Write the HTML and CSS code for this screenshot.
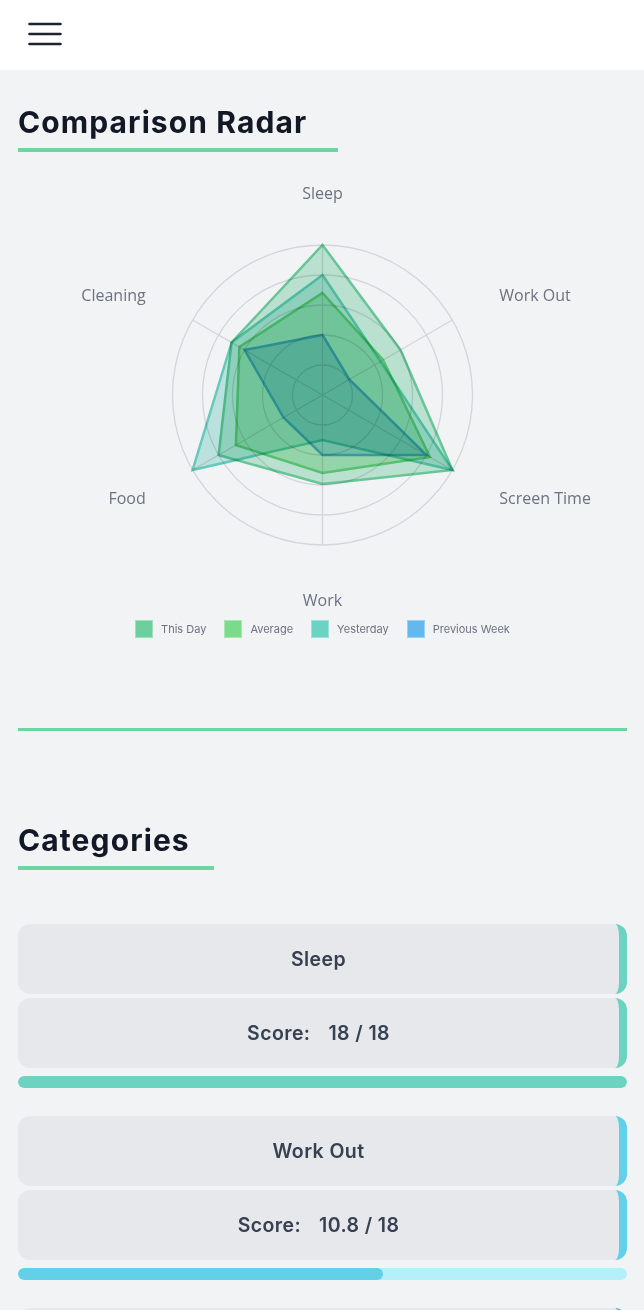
FILE: index.html
```html
<!DOCTYPE html>
<html lang="en">
<head>
<meta charset="utf-8">
<title>Comparison Radar</title>
<link rel="stylesheet" href="styles.css">
</head>
<body>
<header class="topbar">
  <button class="menu-btn" aria-label="Menu">
    <svg width="38" height="28" viewBox="0 0 38 28" fill="none" stroke="#1e2330" stroke-width="2.6" stroke-linecap="round">
      <path d="M3.5 3h31M3.5 13h31M3.5 23h31"/>
    </svg>
  </button>
</header>
<main class="page">
  <section class="radar-section">
    <h2 class="section-title">Comparison Radar</h2>
    <div class="title-bar title-bar--wide"></div>
    <div class="chart">
      <svg class="radar" width="609" height="440" viewBox="0 0 609 440">
        <rect class="radar-bg" x="0" y="0" width="609" height="440"/>
        <g class="grid">
          <circle cx="304.5" cy="225" r="30"/>
          <circle cx="304.5" cy="225" r="60"/>
          <circle cx="304.5" cy="225" r="90"/>
          <circle cx="304.5" cy="225" r="120"/>
          <circle cx="304.5" cy="225" r="150"/>
          <path d="M304.5 225V75M304.5 225L434.4 150M304.5 225L434.4 300M304.5 225V375M304.5 225L174.6 300M304.5 225L174.6 150"/>
        </g>
        <polygon class="ds ds--week" points="304.5,165 331.3,209.5 408.4,285 304.5,285 265.5,247.5 226.6,180"/>
        <polygon class="ds ds--yesterday" points="304.5,105 362.5,191.5 434.4,300 304.5,270 174.6,300 213.6,172.5"/>
        <polygon class="ds ds--average" points="304.5,123 365.1,190 411.9,287 304.5,303 217.9,275 221.4,177"/>
        <polygon class="ds ds--today" points="304.5,75 382.4,180 434.4,300 304.5,314 200.6,285 213.6,172.5"/>
        <g class="axis-labels">
          <text x="304.5" y="28.5" text-anchor="middle">Sleep</text>
          <text x="481.3" y="130.5">Work Out</text>
          <text x="481.3" y="334.3">Screen Time</text>
          <text x="304.5" y="436" text-anchor="middle">Work</text>
          <text x="127.7" y="334.3" text-anchor="end">Food</text>
          <text x="127.7" y="130.5" text-anchor="end">Cleaning</text>
        </g>
      </svg>
      <ul class="legend">
        <li class="legend-item"><span class="swatch swatch--today"></span>This Day</li>
        <li class="legend-item"><span class="swatch swatch--average"></span>Average</li>
        <li class="legend-item"><span class="swatch swatch--yesterday"></span>Yesterday</li>
        <li class="legend-item"><span class="swatch swatch--week"></span>Previous Week</li>
      </ul>
    </div>
  </section>

  <hr class="divider">

  <section class="categories">
    <h2 class="section-title">Categories</h2>
    <div class="title-bar title-bar--narrow"></div>
    <div class="cat-list">
      <article class="cat cat--sleep">
        <div class="cat-card"><span class="cat-name">Sleep</span></div>
        <div class="cat-card"><span class="score-label">Score:</span><span class="score-value">18 / 18</span></div>
        <div class="cat-track"><div class="cat-fill" style="width:100%"></div></div>
      </article>
      <article class="cat cat--workout">
        <div class="cat-card"><span class="cat-name">Work Out</span></div>
        <div class="cat-card"><span class="score-label">Score:</span><span class="score-value">10.8 / 18</span></div>
        <div class="cat-track"><div class="cat-fill" style="width:60%"></div></div>
      </article>
      <article class="cat cat--screen">
        <div class="cat-card" aria-label="Screen Time"></div>
      </article>
    </div>
  </section>
</main>
</body>
</html>
```

FILE: styles.css
```css
* { box-sizing: border-box; }

html, body {
  margin: 0;
  padding: 0;
}

body {
  background: #f2f3f5;
  font-family: Inter, "Noto Sans", sans-serif;
  color: #111827;
}

.topbar {
  height: 70px;
  background: #ffffff;
  display: flex;
  align-items: center;
  padding-left: 26px;
}

.menu-btn {
  border: 0;
  background: none;
  padding: 0;
  margin: 0;
  display: flex;
  cursor: pointer;
}

.page {
  padding: 34px 17px 40px 18px;
}

.section-title {
  margin: 0;
  font-size: 30px;
  line-height: 36px;
  font-weight: 700;
  color: #131826;
  letter-spacing: 1.1px;
}

.title-bar {
  height: 4px;
  margin-top: 8px;
  background: #6fd3a2;
}

.title-bar--wide { width: 320px; }
.title-bar--narrow { width: 196px; }

.chart {
  margin-top: 18px;
}

.radar {
  display: block;
}

.radar-bg {
  fill: #f2f3f5;
}

.grid circle,
.grid path {
  fill: none;
  stroke: #d3d5d9;
  stroke-width: 1.3;
}

.ds {
  stroke-width: 2.5;
  fill-opacity: 0.4;
  mix-blend-mode: multiply;
}

.ds--today { fill: #6ccf9e; stroke: #6ccf9e; }
.ds--average { fill: #7adb8a; stroke: #7adb8a; }
.ds--yesterday { fill: #6bd3c2; stroke: #6bd3c2; }
.ds--week { fill: #63b8f0; stroke: #63b8f0; }

.axis-labels text {
  font-family: "Open Sans", "Noto Sans", sans-serif;
  font-size: 16px;
  fill: #6b7280;
}

.legend {
  list-style: none;
  margin: 10px 0 0;
  padding: 0;
  display: flex;
  justify-content: center;
  gap: 18px;
  height: 18px;
}

.legend-item {
  display: flex;
  align-items: center;
  gap: 8px;
  font-size: 11px;
  color: #6b7280;
}

.swatch {
  width: 18px;
  height: 18px;
  border: 1px solid rgba(255, 255, 255, 0.35);
}

.swatch--today { background: #6ccf9e; }
.swatch--average { background: #7adb8a; }
.swatch--yesterday { background: #6bd3c2; }
.swatch--week { background: #63b8f0; }

.divider {
  margin: 90px 0 0;
  border: 0;
  height: 3px;
  background: #6fd3a2;
}

.categories {
  margin-top: 91px;
}

.cat-list {
  margin-top: 54px;
  display: flex;
  flex-direction: column;
  gap: 28px;
}

.cat {
  display: flex;
  flex-direction: column;
  gap: 4px;
}

.cat--sleep { --accent: #6bd3c0; --track: #c4f0e8; }
.cat--workout { --accent: #63d0ea; --track: #b5eff7; }
.cat--screen { --accent: #60a5fa; --track: #c7e0fd; }

.cat-card {
  height: 70px;
  background: #e7e8ec;
  border-radius: 12px;
  border-right: 8px solid var(--accent);
  display: flex;
  align-items: center;
  justify-content: center;
  gap: 18px;
  font-size: 19.5px;
  font-weight: 600;
  letter-spacing: 0.4px;
  color: #374151;
}

.cat-track {
  margin-top: 4px;
  height: 12px;
  border-radius: 9999px;
  background: var(--track);
  overflow: hidden;
}

.cat-fill {
  height: 100%;
  border-radius: 9999px;
  background: var(--accent);
}
```
